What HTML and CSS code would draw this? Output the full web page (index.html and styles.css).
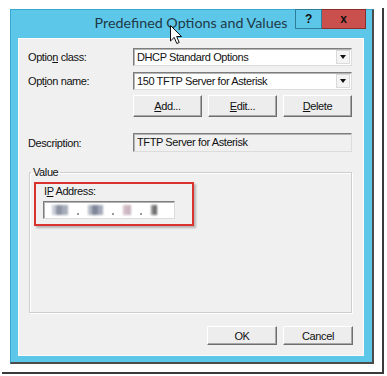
FILE: index.html
```html
<!DOCTYPE html>
<html>
<head>
    <title>Predefined Options and Values</title>
    <link rel="stylesheet" href="styles.css">
</head>
<body>
    <div class="shot">
        <div class="dialog">
            <div class="titlebar">
                <div class="title">Predefined Options and Values</div>
                <div class="caption">
                    <div class="cap-help">?</div>
                    <div class="cap-close">x</div>
                </div>
            </div>
            <div class="client">
                <div class="row">
                    <div class="label">Optio<u>n</u> class:</div>
                    <div class="combo"><span class="combo-text">DHCP Standard Options</span><span class="arrow"></span></div>
                </div>
                <div class="row row-2">
                    <div class="label">Opt<u>i</u>on name:</div>
                    <div class="combo"><span class="combo-text">150 TFTP Server for Asterisk</span><span class="arrow"></span></div>
                </div>
                <div class="row row-btns">
                    <div class="label"></div>
                    <div class="btn-group">
                        <div class="btn"><u>A</u>dd...</div>
                        <div class="btn"><u>E</u>dit...</div>
                        <div class="btn"><u>D</u>elete</div>
                    </div>
                </div>
                <div class="row row-desc">
                    <div class="label">Description:</div>
                    <div class="field">TFTP Server for Asterisk</div>
                </div>
                <fieldset class="group">
                    <legend>Value</legend>
                    <div class="ip-box">
                        <div class="ip-label">I<u>P</u> Address:</div>
                        <div class="ip-field">
                            <span class="blob blob-1"></span>
                            <span class="dot"></span>
                            <span class="blob blob-2"></span>
                            <span class="dot"></span>
                            <span class="blob blob-3"></span>
                            <span class="dot"></span>
                            <span class="blob blob-4"></span>
                        </div>
                    </div>
                </fieldset>
                <div class="footer">
                    <div class="btn btn-ok">OK</div>
                    <div class="btn">Cancel</div>
                </div>
            </div>
        </div>
        <svg class="cursor" width="13" height="20" viewBox="0 0 13 20">
            <path d="M0.5 0.5 L0.5 16 L4.2 12.4 L6.8 18.5 L9.2 17.5 L6.7 11.5 L11.5 11.5 Z" fill="#fff" stroke="#111" stroke-width="1"/>
        </svg>
    </div>
</body>
</html>
```

FILE: styles.css
```css
body {
    margin: 0;
    background: #fff;
    font-family: "Liberation Sans", Arial, sans-serif;
    font-size: 11px;
    letter-spacing: -0.4px;
    color: #111;
}

.shot {
    position: relative;
    width: fit-content;
    margin: 8px 0 0 2px;
    padding: 1px 8px 8px 8px;
    border-right: 2px solid #3a3a3a;
    border-bottom: 2px solid #3a3a3a;
}

.dialog {
    width: 361px;
    padding-bottom: 6px;
    background: #5dc7ea;
    border-top: 1px solid #3aa7cf;
    border-left: 1px solid #3aa7cf;
    border-right: 2px solid #4b4b4b;
    border-bottom: 2px solid #4b4b4b;
}

.titlebar {
    display: flex;
    align-items: flex-start;
    height: 28px;
    padding-left: 76px;
    padding-right: 6px;
}

.title {
    flex: 1;
    display: flex;
    justify-content: center;
    white-space: nowrap;
    font-family: "Lato", sans-serif;
    font-size: 14.3px;
    letter-spacing: 0;
    line-height: 26px;
    color: #1d3a46;
}

.caption {
    display: flex;
    margin-top: -1px;
}

.cap-help,
.cap-close {
    box-sizing: border-box;
    height: 20px;
    display: flex;
    align-items: center;
    justify-content: center;
    font-weight: bold;
    font-size: 12px;
    color: #111;
}

.cap-help {
    width: 27px;
    background: #5dc7ea;
    border: 1px solid #2f7e99;
}

.cap-close {
    width: 44px;
    background: #c9504c;
    border: 1px solid #8d2e2b;
    border-left: none;
}

.client {
    box-sizing: border-box;
    height: 318px;
    margin: 0 8px 0 7px;
    padding: 9px 11px 10px 9px;
    background: #f0f0f0;
    border: 1px solid #fbfbfb;
    display: flex;
    flex-direction: column;
}

.row {
    display: flex;
    align-items: center;
}

.row-2 {
    margin-top: 6px;
}

.row-btns {
    margin-top: 5px;
}

.row-desc {
    margin-top: 16px;
}

.label {
    width: 105px;
    flex-shrink: 0;
}

.combo,
.field {
    box-sizing: border-box;
    width: 219px;
    border: 1px solid;
    border-color: #7d7d7d #dcdcdc #dcdcdc #7d7d7d;
    box-shadow: inset 1px 1px 0 #b4b4b4;
}

.combo {
    height: 18px;
    display: flex;
    align-items: center;
    background: #fff;
}

.combo-text {
    flex: 1;
    padding-left: 3px;
}

.arrow {
    box-sizing: border-box;
    width: 14px;
    height: 14px;
    margin-right: 1px;
    background: #f4f4f4;
    border: 1px solid #dadada;
    display: flex;
    align-items: center;
    justify-content: center;
}

.arrow::after {
    content: "";
    border-left: 3px solid transparent;
    border-right: 3px solid transparent;
    border-top: 4px solid #111;
}

.field {
    height: 19px;
    line-height: 17px;
    padding-left: 3px;
    background: #f0f0f0;
}

.btn-group {
    width: 219px;
    display: flex;
    justify-content: space-between;
}

.btn {
    box-sizing: border-box;
    width: 69px;
    height: 22px;
    display: flex;
    align-items: center;
    justify-content: center;
    background: #ededed;
    border: 1px solid;
    border-color: #fff #6e6e6e #6e6e6e #fff;
    box-shadow: inset -1px -1px 0 #a8a8a8;
}

.group {
    flex: 1;
    min-width: 0;
    margin: 14px 0 0 1px;
    padding: 0;
    border: 1px solid #cdcdcd;
    box-shadow: 1px 1px 0 #fff, inset 1px 1px 0 #fff;
}

.group legend {
    margin-left: 1px;
    padding: 0 2px;
    line-height: 13px;
}

.ip-box {
    box-sizing: border-box;
    width: 160px;
    height: 44px;
    margin: 3px 0 0 4px;
    padding: 1px 0 0 7px;
    border: 2px solid #d9322f;
    box-shadow: 2px 2px 2px rgba(0, 0, 0, 0.25);
}

.ip-label {
    line-height: 13px;
    padding-left: 1px;
}

.ip-field {
    box-sizing: border-box;
    width: 132px;
    height: 18px;
    margin-top: 3px;
    padding-left: 8px;
    display: flex;
    align-items: center;
    background: #fff;
    border: 1px solid;
    border-color: #7d7d7d #dcdcdc #dcdcdc #7d7d7d;
    box-shadow: inset 1px 1px 0 #b4b4b4;
}

.blob {
    height: 10px;
    filter: blur(0.8px);
}

.blob-1 {
    width: 16px;
    background: linear-gradient(90deg, #c8ccd6 0 25%, #8d93a3 25% 60%, #a7acba 60%);
}

.blob-2 {
    width: 15px;
    background: linear-gradient(90deg, #b5bac6 0 30%, #7f8698 30% 70%, #a3a9b8 70%);
}

.blob-3 {
    width: 8px;
    background: linear-gradient(90deg, #d6c3cc, #c4aeb9);
}

.blob-4 {
    width: 6px;
    background: linear-gradient(90deg, #9a9a9a, #555);
}

.dot {
    width: 2px;
    height: 2px;
    margin: 7px 9px 0 9px;
    background: #9a9a9a;
}

.footer {
    display: flex;
    justify-content: flex-end;
    gap: 6px;
    margin-top: 13px;
    margin-right: -1px;
}

.footer .btn {
    width: 70px;
    height: 19px;
}

.cursor {
    position: absolute;
    left: 168px;
    top: 17px;
}
```
